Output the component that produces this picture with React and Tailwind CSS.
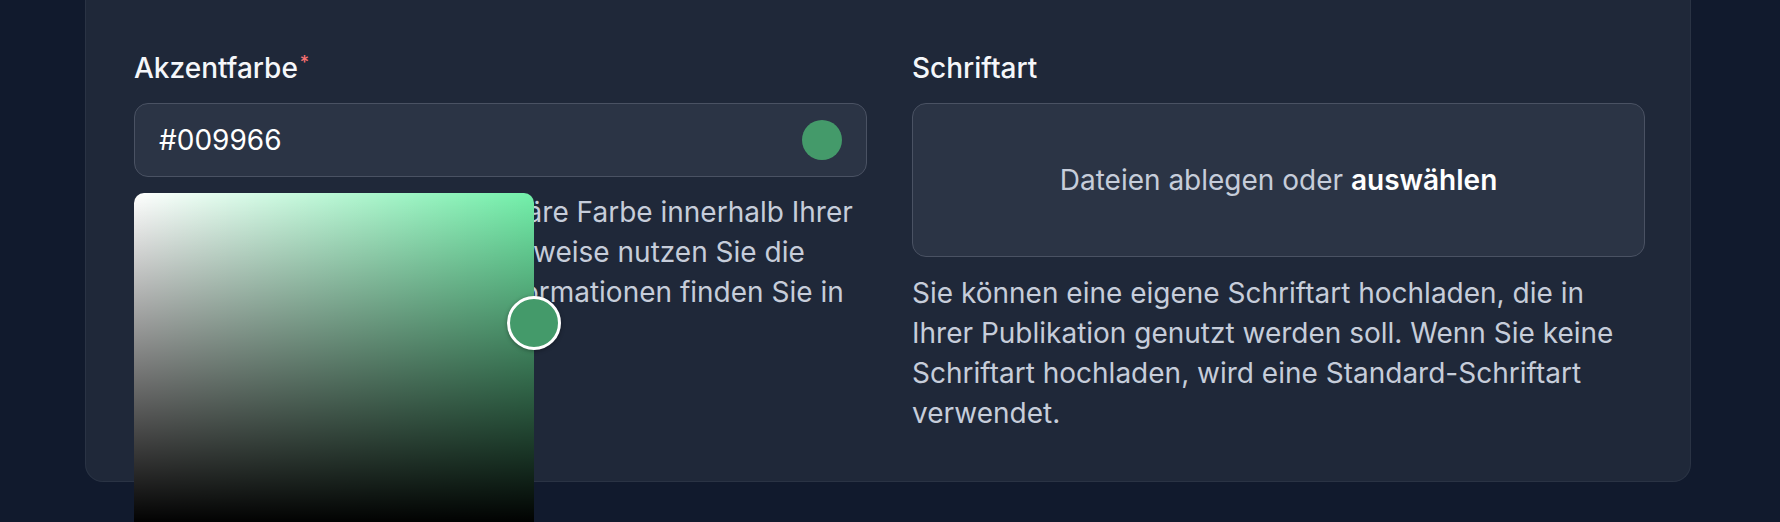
import React from "react";

export default function App() {
  return (
    <div
      className="h-[522px] overflow-hidden bg-[#111a2d] pl-[85px] pr-[89px]"
      style={{ fontFamily: "Inter, 'Noto Sans', sans-serif" }}
    >
      <div className="grid grid-cols-2 gap-x-[45px] rounded-b-[18px] border border-t-0 border-[#2a3344] bg-[#1f2839] pb-[48px] pl-[48px] pr-[45px] pt-[48px]">
        {/* Left column */}
        <div className="flex flex-col">
          <div className="text-[28px] leading-[40px] font-medium text-[#f5f7fa]">
            Akzentfarbe
            <sup className="ml-[2px] text-[18px] text-[#f87171]">*</sup>
          </div>
          <div className="relative mt-[15px]">
            <div className="flex h-[74px] items-center justify-between rounded-[14px] border border-[#4a5263] bg-[#2b3445] pl-[24px] pr-[24px]">
              <span className="text-[28px] text-white">#009966</span>
              <span className="h-[40px] w-[40px] rounded-full bg-[#449a6a]" />
            </div>
            {/* Color picker popover */}
            <div
              className="absolute left-0 top-[90px] z-10 h-[332px] w-[400px] rounded-t-[10px]"
              style={{
                background:
                  "linear-gradient(to top, #000 0%, rgba(0,0,0,0) 100%), linear-gradient(to right, #fff 0%, rgba(255,255,255,0) 100%), #72f0aa",
              }}
            >
              <div className="absolute left-[373px] top-[103px] h-[54px] w-[54px] rounded-full border-[3.5px] border-white bg-[#449a6a] shadow-[0_1px_4px_rgba(0,0,0,0.35)]" />
            </div>
          </div>
          <p className="mt-[15px] text-[28px] leading-[40px] text-[#c6cdda]">
            Die Akzentfarbe wird die primäre Farbe innerhalb Ihrer Publikation
            und App. Beispielsweise nutzen Sie die Farbe für Buttons. Weitere
            Informationen finden Sie in der Dokumentation.
          </p>
        </div>

        {/* Right column */}
        <div className="flex flex-col">
          <div className="text-[28px] leading-[40px] font-medium text-[#f5f7fa]">
            Schriftart
          </div>
          <div className="mt-[15px] flex h-[154px] items-center justify-center rounded-[14px] border border-[#4a5263] bg-[#2b3445]">
            <span className="text-[28px] text-[#c6cdda]">
              Dateien ablegen oder{" "}
              <span className="font-semibold text-white">auswählen</span>
            </span>
          </div>
          <p className="mt-[16px] text-[28px] leading-[40px] text-[#c6cdda]">
            Sie können eine eigene Schriftart hochladen, die in Ihrer
            Publikation genutzt werden soll. Wenn Sie keine Schriftart
            hochladen, wird eine Standard-Schriftart verwendet.
          </p>
        </div>
      </div>
    </div>
  );
}
